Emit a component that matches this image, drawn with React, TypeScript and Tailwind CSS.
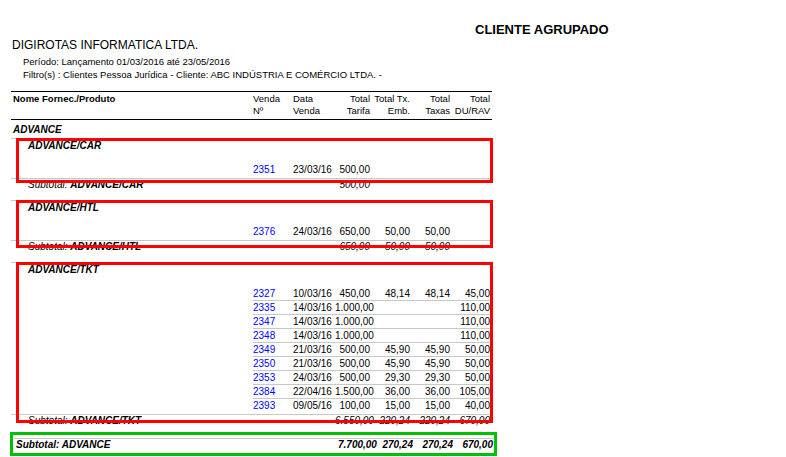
const F = { fontFamily: '"Liberation Sans", Arial, sans-serif' };

type R = [string, string, string, string, string, string];

function Row({ r, line = true }: { r: R; line?: boolean }) {
  return (
    <div className="flex h-[14px] items-center text-[10px] leading-none">
      <div className="w-[242px]" />
      <div className={`flex w-[239px] h-full items-center ${line ? 'border-b border-[#c8c8c8]' : ''}`}>
        <div className="w-[40px] text-[#0000ff]">{r[0]}</div>
        <div className="w-[42px]">{r[1]}</div>
        <div className="w-[35px] text-right">{r[2]}</div>
        <div className="w-[40px] text-right">{r[3]}</div>
        <div className="w-[40px] text-right">{r[4]}</div>
        <div className="w-[40px] text-right">{r[5]}</div>
      </div>
    </div>
  );
}

function Sub({ label, v, bold = false }: { label: string; v: string[]; bold?: boolean }) {
  return (
    <div className={`flex h-[12px] items-center text-[10px] italic leading-none ${bold ? 'font-bold' : ''}`}>
      <div className={`w-[242px] ${bold ? 'pl-[2px]' : 'pl-[17px]'}`}>
        <span className={bold ? '' : 'font-normal'}>Subtotal: </span>
        <span className="font-bold">{label}</span>
      </div>
      <div className="w-[82px]" />
      <div className="w-[35px] text-right">{v[0]}</div>
      <div className="w-[40px] text-right">{v[1]}</div>
      <div className="w-[40px] text-right">{v[2]}</div>
      <div className="w-[40px] text-right">{v[3]}</div>
    </div>
  );
}

function Group({ name, rows, sub, h }: { name: string; rows: R[]; sub: string[]; h: string }) {
  return (
    <div className={`relative ${h}`}>
      <div className="border-t border-[#c8c8c8] w-[481px]" />
      <div className="pl-[17px] h-[12px] mt-[1px] text-[10px] italic font-bold leading-[12px]">{name}</div>
      <div className="h-[11px]" />
      {rows.map((r, i) => (
        <Row key={i} r={r} line={i < rows.length - 1} />
      ))}
      <div className="border-t border-[#c8c8c8] w-[481px] mt-[1px]" />
      <Sub label={name} v={sub} />
      <div className="absolute left-[5px] top-0 w-[477px] bottom-0 border-[3px] border-[#ff0000]" />
    </div>
  );
}

export default function App() {
  return (
    <div className="w-[786px] h-[457px] bg-white text-black overflow-hidden relative" style={F}>
      <div className="absolute left-[475px] top-[20px] text-[13px] font-bold">CLIENTE AGRUPADO</div>
      <div className="pl-[11px] pt-[38px]">
        <div className="text-[12px] leading-[14px] pl-[1px]">DIGIROTAS INFORMATICA LTDA.</div>
        <div className="pl-[12px] mt-[3px] text-[9.5px] leading-[13px]">
          <div>Período: Lançamento 01/03/2016 até 23/05/2016</div>
          <div>Filtro(s) : Clientes Pessoa Jurídica - Cliente: ABC INDÚSTRIA E COMÉRCIO LTDA. -</div>
        </div>
        <div className="mt-[10px] w-[481px] border-t border-black border-b pb-[2px] pt-[1px] text-[9.5px] leading-[12px]">
          <div className="flex">
            <div className="w-[242px] font-bold pl-[2px]">Nome Fornec./Produto</div>
            <div className="w-[40px]">Venda<br />Nº</div>
            <div className="w-[42px]">Data<br />Venda</div>
            <div className="w-[35px] text-right">Total<br />Tarifa</div>
            <div className="w-[40px] text-right">Total Tx.<br />Emb.</div>
            <div className="w-[40px] text-right">Total<br />Taxas</div>
            <div className="w-[40px] text-right">Total<br />DU/RAV</div>
          </div>
        </div>
        <div className="h-[18px] flex items-center pl-[2px] text-[10px] italic font-bold">ADVANCE</div>
        <Group name="ADVANCE/CAR" h="h-[45px]" rows={[["2351", "23/03/16", "500,00", "", "", ""]]} sub={["500,00", "", "", ""]} />
        <div className="h-[17px]" />
        <Group name="ADVANCE/HTL" h="h-[48px]" rows={[["2376", "24/03/16", "650,00", "50,00", "50,00", ""]]} sub={["650,00", "50,00", "50,00", ""]} />
        <div className="h-[14px]" />
        <Group
          name="ADVANCE/TKT"
          h="h-[161px]"
          rows={[
            ["2327", "10/03/16", "450,00", "48,14", "48,14", "45,00"],
            ["2335", "14/03/16", "1.000,00", "", "", "110,00"],
            ["2347", "14/03/16", "1.000,00", "", "", "110,00"],
            ["2348", "14/03/16", "1.000,00", "", "", "110,00"],
            ["2349", "21/03/16", "500,00", "45,90", "45,90", "50,00"],
            ["2350", "21/03/16", "500,00", "45,90", "45,90", "50,00"],
            ["2353", "24/03/16", "500,00", "29,30", "29,30", "50,00"],
            ["2384", "22/04/16", "1.500,00", "36,00", "36,00", "105,00"],
            ["2393", "09/05/16", "100,00", "15,00", "15,00", "40,00"],
          ]}
          sub={["6.550,00", "220,24", "220,24", "670,00"]}
        />
        <div className="h-[9px]" />
        <div className="relative -ml-[1px] w-[487px] h-[24px] border-[3px] border-[#00c000] pt-[3px] pl-[1px]">
          <div className="border-t border-[#c8c8c8] w-[479px]" />
          <Sub label="ADVANCE" v={["7.700,00", "270,24", "270,24", "670,00"]} bold />
        </div>
      </div>
    </div>
  );
}
